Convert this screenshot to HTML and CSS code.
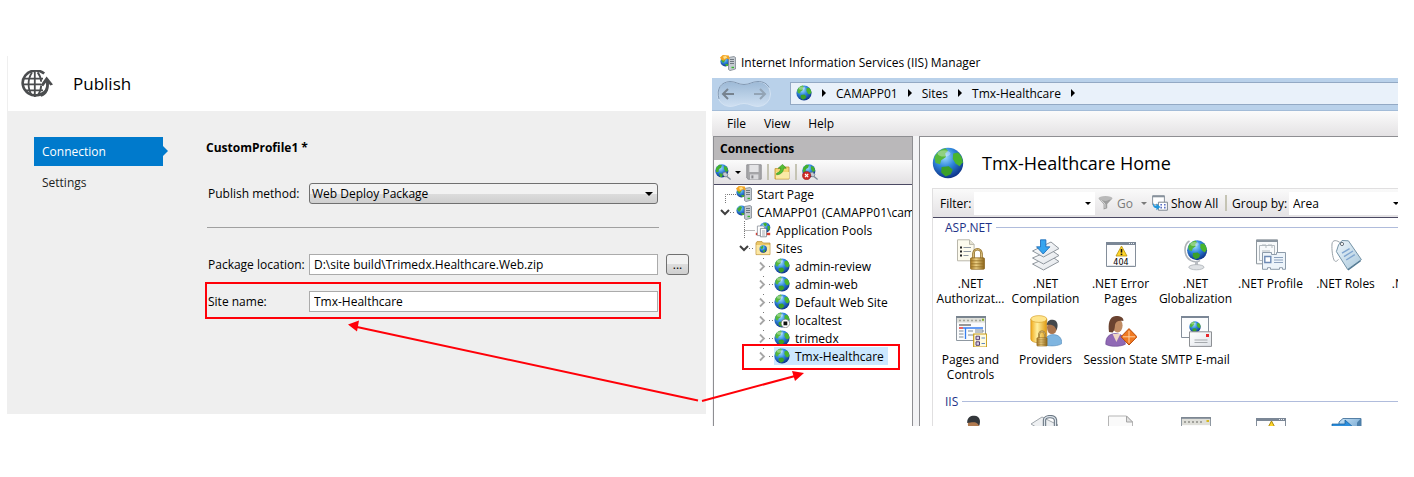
FILE: index.html
```html
<!DOCTYPE html>
<html lang="en">
<head>
<meta charset="utf-8">
<title>Publish and IIS Manager</title>
<link rel="stylesheet" href="styles.css">
</head>
<body>
<svg class="sprite" aria-hidden="true">
  <defs>
    <radialGradient id="sea" cx="40%" cy="30%" r="75%"><stop offset="0" stop-color="#9fdcff"/><stop offset=".45" stop-color="#2f86dc"/><stop offset="1" stop-color="#0a2a80"/></radialGradient>
    <linearGradient id="gold" x2="1"><stop offset="0" stop-color="#f0a818"/><stop offset=".4" stop-color="#fff0a0"/><stop offset="1" stop-color="#e09a10"/></linearGradient>
    <linearGradient id="brass" x2="1"><stop offset="0" stop-color="#a87820"/><stop offset=".4" stop-color="#f0d488"/><stop offset="1" stop-color="#8c6418"/></linearGradient>
    <linearGradient id="paper" x2="1" y2="1"><stop offset="0" stop-color="#fff"/><stop offset="1" stop-color="#dfe3e8"/></linearGradient>
    <linearGradient id="tag" x2="1" y2="1"><stop offset="0" stop-color="#eef6fb"/><stop offset="1" stop-color="#a9c8dc"/></linearGradient>
    <linearGradient id="cube" x2="1" y2="1"><stop offset="0" stop-color="#c8e4f8"/><stop offset="1" stop-color="#5b93c4"/></linearGradient>
    <linearGradient id="pit" y2="1" x2="0"><stop offset="0" stop-color="#9cb9d6"/><stop offset="1" stop-color="#cfe0f2"/></linearGradient>
  </defs>
  <symbol id="globe" viewBox="0 0 16 16">
    <circle cx="8" cy="8" r="7.6" fill="url(#sea)"/>
    <path d="M1.2 5.2C2.3 2.6 4.4 1 6.8.6L8 2 6.6 3.2 7 5 4.6 6.6 4 8.6 1.8 8z" fill="#55b83c"/>
    <path d="M10.6 3.2 13 2.8c1.4 1.2 2.3 2.9 2.4 4.8l-1.6 2-2-1.4L10.4 6z" fill="#49b52e"/>
    <path d="M4.8 10 8.4 9.6l2 1.8-1 2.2-2.6 1.2-2.2-2z" fill="#3ca028"/>
    <ellipse cx="6" cy="3.2" rx="3.2" ry="1.6" fill="#fff" opacity=".35"/>
  </symbol>
  <symbol id="server" viewBox="0 0 16 16">
    <circle cx="5.4" cy="6.5" r="5" fill="url(#sea)"/><path d="M1 5 4 2l2 1-1 3-2 2zM5 9l3 0v2l-2 0z" fill="#45ad35"/>
    <path d="M8.5 2.5 14 1.5l1.5 1V14L10 15.6 8.5 14.5z" fill="#c5cbd1" stroke="#717a84" stroke-width=".7"/>
    <path d="M10 4.5h4M10 6.5h4M10 8.5h4" stroke="#59626c" stroke-width=".8"/><path d="M11.5 12.5h2.5" stroke="#33b52d" stroke-width="1.4"/>
  </symbol>
  <symbol id="iis" viewBox="0 0 16 16">
    <use href="#server"/><path d="M0 2.4 2.8 0l6 .6 1 4-3-1L4 5.8 1.5 5z" fill="#f3a424"/><path d="M3 1.6 6 1l1.2 1.8L4 4z" fill="#ffe38a"/>
  </symbol>
  <symbol id="plugglobe" viewBox="0 0 16 16">
    <circle cx="6.8" cy="6.8" r="6.6" fill="url(#sea)"/><path d="M1 4 4 .8 7 1 6 4 4 5 3.4 8 1 8zM9 2l3 1 1.2 4-2.4 1L9 5zM4 9l4 1-1 3-2 0z" fill="#43b02e"/>
    <path d="M8 8.6 10.6 8l2.2 2.4-.6 2.2-2.4.2L8 11z" fill="#c2ccd6" stroke="#68747f" stroke-width=".7"/><path d="M12 12.4 15.6 15.4" stroke="#7d8b99" stroke-width="1.3"/>
  </symbol>
  <symbol id="pools" viewBox="0 0 16 16">
    <circle cx="10" cy="5.6" r="5.3" fill="url(#sea)"/><path d="M8 1.6l3-.8 1 2-2 2zM12.4 4l2.4 0v4l-2 .6z" fill="#43b02e"/>
    <path d="M.8 12h14.4" stroke="#d63c2e" stroke-width="2.4"/>
    <path d="M2.4 4h6l1 1v8.6h-7z" fill="#fff" stroke="#8b929a" stroke-width=".8"/><path d="M5.4 6.4h5l1 1v7.4h-6z" fill="#fff" stroke="#767e88" stroke-width=".8"/><path d="M7 9h3M7 11h3M7 13h3" stroke="#8d96a0" stroke-width=".8"/>
  </symbol>
  <symbol id="sites" viewBox="0 0 16 16">
    <path d="M1 3 2 1.6h5L8.4 3H15v11.6H1z" fill="#ecc868" stroke="#b88a30" stroke-width=".7"/><path d="M1.4 5h13.2v9.2H1.4z" fill="#fbe7a4"/><circle cx="8.2" cy="9" r="3.7" fill="url(#sea)"/><path d="M5.4 7.4l2.4-1.8.6 2-1.4 2zM8 10.4l2.6-.8-1 2.4H8z" fill="#43b02e"/>
  </symbol>
  <symbol id="stopped" viewBox="0 0 16 16">
    <use href="#globe"/><circle cx="11.4" cy="11.4" r="4.2" fill="#fff" stroke="#777" stroke-width=".7"/><path d="M9.5 9.5h3.8v3.8H9.5z" fill="#111"/>
  </symbol>
  <symbol id="save" viewBox="0 0 16 16">
    <path d="M.8.8h14.4v14.4H2L.8 14z" fill="#a5a5a8" stroke="#919195"/><path d="M3.4 1h9.2v7H3.4z" fill="#e4e4e6"/><path d="M4 10.4h8.4v5H4z" fill="#d9d9dc"/><path d="M5.4 11.4h2v3h-2z" fill="#88888c"/>
  </symbol>
  <symbol id="upfolder" viewBox="0 0 16 16">
    <path d="M1 15V4.6h7L9.4 3H15v12z" fill="#f5d572" stroke="#bd9131" stroke-width=".8"/><path d="M2 8h13v6.6H2z" fill="#fbe9a6"/>
    <path d="M2.6 9.2C5 8.6 6.6 7 6.8 4.2H4.2L8.6.4l3.6 3.8H9.6C9.4 8 7 10.4 2.6 10.8z" fill="#55bf35" stroke="#2d8a18" stroke-width=".6"/>
  </symbol>
  <symbol id="dropglobe" viewBox="0 0 16 16">
    <use href="#plugglobe"/><circle cx="4.6" cy="11.6" r="4.2" fill="#d02a26" stroke="#8e1412" stroke-width=".5"/><path d="M3 10l3.2 3.2M6.2 10 3 13.2" stroke="#fff" stroke-width="1.2"/>
  </symbol>
  <symbol id="funnel" viewBox="0 0 16 16">
    <ellipse cx="7.5" cy="3.2" rx="7" ry="2.2" fill="#b9b9b9"/><path d="M.5 3.6 5.6 9v5.6l3.6-1.4V9l5.2-5.4c-3 2.4-11 2.4-13.9 0z" fill="#9d9d9d"/><path d="M3 4.8 7 9v4" stroke="#d8d8d8" fill="none"/>
  </symbol>
  <symbol id="showall" viewBox="0 0 16 16">
    <path d="M.6.8h11.8v9H.6z" fill="#fff" stroke="#88929c"/><path d="M.6 1.4h11.8" stroke="#88929c" stroke-width="1.8"/>
    <path d="M6.4 7.2h9v8h-9z" fill="#fff" stroke="#7c8690"/><path d="M8.4 9.8h1.6M12 9.8h1.6M8.4 12.6h1.6M12 12.6h1.6" stroke="#5a6fc4" stroke-width="1.6"/>
    <path d="M1.4 7.4c.2 2.6 1 3.4 3 3.4V8.6L8.4 12l-4 3.2V13C2 13 .2 11 1.4 7.4z" fill="#2196dc"/>
  </symbol>
  <symbol id="window" viewBox="0 0 32 32">
    <path d="M1.5 3.5h29v24h-29z" fill="#fdfdfe" stroke="#848e9a"/><path d="M1 4.5h30" stroke="#7b8796" stroke-width="3"/><path d="M24 4.5h5" stroke="#e6ebf0" stroke-width="1" stroke-dasharray="1 1"/><path d="M2.5 26.5h27" stroke="#e3e7ec"/>
  </symbol>
  <symbol id="padlock" viewBox="0 0 16 24">
    <path d="M4 12V7a4 4.6 0 0 1 8 0v5" fill="none" stroke="#937029" stroke-width="2.6"/><path d="M4 12V7a4 4.6 0 0 1 8 0v5" fill="none" stroke="#e3c883" stroke-width=".9"/>
    <rect x="1" y="11" width="14" height="11.5" rx="1" fill="url(#brass)" stroke="#87611b" stroke-width=".7"/><path d="M1.5 14h13M1.5 17h13M1.5 20h13" stroke="#916c24" stroke-width=".8"/>
  </symbol>
  <symbol id="authz" viewBox="0 0 32 32">
    <path d="M2.5.8h12l4.6 4.6v16.4H2.5z" fill="#fdfbee" stroke="#b9b7ab"/><path d="M14.5.8v4.6h4.6" fill="#e8e5d4" stroke="#b9b7ab"/><path d="M5 8.5h2M5 12.5h2M5 16.5h2" stroke="#222" stroke-width="2"/><path d="M8.5 8.5H16M8.5 12.5H16M8.5 16.5h5" stroke="#8e96a0"/>
    <use href="#padlock" x="14.5" y="7.8" width="16" height="24"/>
  </symbol>
  <symbol id="compile" viewBox="0 0 32 32">
    <path d="M2.5 25 21 17l8 5.5L13.5 31z" fill="url(#paper)" stroke="#8f969d"/><path d="M2.5 19 21 11l8 5.5L13.5 25z" fill="url(#paper)" stroke="#8f969d"/><path d="M2.5 12 21 3l8 6.5L13.5 18z" fill="url(#paper)" stroke="#8f969d"/>
    <path d="M10.5.8h5.4v7h4L13.2 15 6.5 7.8h4z" fill="#36a5ef" stroke="#1465b4" stroke-width=".8"/>
  </symbol>
  <symbol id="world" viewBox="0 0 32 32">
    <path d="M9.5 2C3.4 5.4 3.2 17.6 11 21.6c3 1.4 6 1.6 9 0" fill="none" stroke="#aeb3b8" stroke-width="1.6"/><path d="M15 22h3v5h-3z" fill="#b9bdc2"/><ellipse cx="16.4" cy="28.2" rx="7.6" ry="2.6" fill="#dfe2e5" stroke="#a2a7ad" stroke-width=".7"/>
    <use href="#globe" x="6.6" y=".8" width="21" height="21"/>
  </symbol>
  <symbol id="profile" viewBox="0 0 32 32">
    <path d="M1.5.8h21v24h-21z" fill="#f8fafb" stroke="#8f989f"/><path d="M1.5 2h21" stroke="#8a959f" stroke-width="2"/><path d="M4.5 6.5h15v15h-15zM7 6h4v3M13 6h4v3M7 12h8M7 15h5" fill="none" stroke="#b3babf"/>
    <path d="M7.5 13.5h9v2h5v-2h9v16.8h-3v-1.6h-3v1.6h-9v-1.6h-3v1.6h-5z" fill="#edf4fa" stroke="#8d9baa"/><path d="M9.8 17.5h6v6h-6z" fill="#fff" stroke="#6d89b4" stroke-width="1.4"/><path d="M19 18.5h9M19 21h9M19 23.5h9" stroke="#8ba0bd"/>
  </symbol>
  <symbol id="roles" viewBox="0 0 32 32">
    <path d="M11 4.5C7 .6 2.4.6 2 5c-.4 6 .6 13 2.2 16.4 1.4 1.8 3 .8 4.2-1" fill="none" stroke="#9ca4aa"/>
    <path d="M8.5 6 12 1.5l6.4.3L31.4 20.6 17.6 30.4 6.4 12.6z" fill="url(#tag)" stroke="#7593a6"/><path d="M30.6 21.8 18 31" stroke="#4f7792" stroke-width="1.2"/><circle cx="12" cy="5" r="1.6" fill="#fff" stroke="#66717a"/><path d="M12 14.2l7.6-4.6M14 17.6l9-5.6M16.2 21l8.6-5.4" stroke="#7fa5d0" stroke-width="1.4"/>
  </symbol>
  <symbol id="pages" viewBox="0 0 32 32">
    <path d="M1.5 1.5h29v24h-29z" fill="#fafbfc" stroke="#8f98a1"/><path d="M2 3h28v4.6H2z" fill="#dfe0da"/><path d="M1 2h30" stroke="#79848f" stroke-width="2"/><path d="M4 5.5h22" stroke="#a3a59b" stroke-width="1.4" stroke-dasharray="2 2"/><path d="M27 3.8h2v2h-2z" fill="#84ad26"/>
    <path d="M4 10h12" stroke="#333"/><path d="M4 13h4" stroke="#e03030" stroke-width="1.5"/><path d="M8 13h20M10.5 13v11" stroke="#357ef0" stroke-width="1.3"/><path d="M4 16h4.5M4 19h4.5M4 22h4.5M13 16h5M20 15h8v2h-8M13 20h5" fill="none" stroke="#7f8a96"/>
    <path d="M18.7 19h13v13h-13z" fill="#fffbe0" stroke="#c79b16" stroke-width="1.2"/><path d="M21 21.2h3.5v3.5H21zM21 26.8h3.5v3.5H21z" fill="#d6cbe8" stroke="#57416f"/><path d="M26.5 23H30M26.5 28.5H30" stroke="#5e89c2"/>
  </symbol>
  <symbol id="providers" viewBox="0 0 32 32">
    <path d="M.8 4v20c0 5 16 5 16 0V4z" fill="url(#gold)" stroke="#c68a16" stroke-width=".6"/><ellipse cx="8.8" cy="4" rx="8" ry="3.4" fill="#ffe58c" stroke="#d19822" stroke-width=".6"/>
    <path d="M15 30c-.2-7 2.6-10.4 8-10.4s9 3 8.8 9c-3 2.4-12 3-16.8 1.4z" fill="#7fb5e0" stroke="#4f87b5" stroke-width=".6"/><ellipse cx="22" cy="12.6" rx="5" ry="6.4" fill="#a8744e"/><path d="M16.8 10C17 5 21 4 24 5c4 1 4.4 6.4 2.6 10C25 12 24 9 16.8 10z" fill="#43474b"/>
    <use href="#padlock" x="6" y="14.6" width="12" height="17.6"/>
  </symbol>
  <symbol id="session" viewBox="0 0 32 32">
    <path d="M.8 29.4C.6 22 4 19 10 18.6c6 0 10 3 10.4 10.6-5 2.6-14 3-19.6.2z" fill="#9069b5" stroke="#67438c" stroke-width=".6"/><path d="M7.6 19 11.4 27l4-8z" fill="#efd6c4"/>
    <ellipse cx="12.6" cy="10.6" rx="5" ry="7" fill="#c08c64"/><path d="M4 17C3 9 4 1.4 11 1c5 0 7.6 1.6 7.4 5-4-1-8 0-8.4 4-.2 3-.6 6-2.4 7.4z" fill="#6b4330"/>
    <path d="M24 13.6 32 21.8 24 30 16 21.8z" fill="#f07a22" stroke="#b84a0c"/><path d="M24 15.8v12M18 21.8h12" stroke="#ffd0a2"/>
  </symbol>
  <symbol id="smtp" viewBox="0 0 32 32">
    <path d="M1.5 1.5h27v21h-27z" fill="#fcfdfe" stroke="#848e9a"/><path d="M1 2h28" stroke="#7b8796" stroke-width="2"/><use href="#globe" x="9" y="6" width="12" height="12"/>
    <path d="M9.5 16.8h22v14.6h-22z" fill="url(#paper)" stroke="#8d9094"/><path d="M26 19h3v3h-3z" fill="#e8262a"/><path d="M14.5 25h13M14.5 27.5h13" stroke="#a5a9ad"/>
  </symbol>
  <symbol id="person" viewBox="0 0 32 32"><ellipse cx="18.5" cy="9" rx="5.6" ry="7.4" fill="#b07a50"/><path d="M12.2 8C12 2 16 .6 19.6.8c5 .2 6.6 5 4.6 10-1.6-2-2-5-12-2.8z" fill="#33373b"/></symbol>
  <symbol id="lockpage" viewBox="0 0 32 32"><path d="M1 9 12 2l16 8-12 8z" fill="#eef0f2" stroke="#a1a7ad"/><path d="M14.5 14V5c0-4 10-5 11 0v9" fill="none" stroke="#6c7884" stroke-width="3.4"/><path d="M14.5 14V5c0-4 10-5 11 0v9" fill="none" stroke="#dfe6ed" stroke-width="1.2"/></symbol>
  <symbol id="page" viewBox="0 0 32 32"><path d="M3.5 1h18l6 6v24h-24z" fill="#fafafa" stroke="#b5b5b5"/><path d="M21.5 1v6h6z" fill="#e2e2e2" stroke="#a5a5a5"/></symbol>
  <symbol id="listing" viewBox="0 0 32 32"><path d="M1.5 2.5h29v28h-29z" fill="#fafafa" stroke="#8f98a1"/><path d="M2 4h28v6H2z" fill="#dfdfd9"/><path d="M1 3h30" stroke="#79848f" stroke-width="1.6"/><path d="M4 7h20" stroke="#8f8f88" stroke-width="1.6" stroke-dasharray="2 2"/><path d="M26.5 5h2.5v2h-2.5z" fill="#d6b920"/></symbol>
  <symbol id="warnwin" viewBox="0 0 32 32"><use href="#window"/><path d="M16.5 6 23 18H10z" fill="#ffd52a" stroke="#a8870c"/></symbol>
  <symbol id="redirect" viewBox="0 0 32 32"><path d="M9 7 13 3.5h18V22H9z" fill="url(#cube)" stroke="#5580a6"/><path d="M27 7.5 31 3.5V22l-4 4z" fill="#4d7faa"/><path d="M2 9h13V5l8 7-8 7v-4H2z" fill="#2c8edc" stroke="#155b9c" stroke-width=".7"/></symbol>
  <symbol id="open" viewBox="0 0 22 18"><path d="M7 7l4 4 4-4" fill="none" stroke="#404040" stroke-width="2"/><path d="M16 9.5H22" stroke="#777" stroke-dasharray="1 2"/></symbol>
  <symbol id="closed" viewBox="0 0 22 18"><path d="M11.5 1v1" stroke="#777"/><path d="M8 5.5l4 4-4 4" fill="none" stroke="#a6a6a6" stroke-width="1.8"/><path d="M17 9.5H22" stroke="#777" stroke-dasharray="1 2"/></symbol>
</svg>

<main class="stage">
  <section class="publish">
    <header class="publish-head">
      <svg class="publish-logo" viewBox="0 0 32 28" aria-hidden="true"><g fill="none" stroke="#4b4d4f"><path d="M23.2 3.6A13 12.4 0 1 0 26 19" stroke-width="2.6"/><path d="M11 2.4C6.4 9 6.4 19 11 25.6M16.6 2.4c2.4 3 3.4 6 3.6 9.4M16.6 25.6c2.4-3 3.4-6.4 3.6-10M13.8 1v26M3 8.6h19M1 14.4h19M4 20.4h18" stroke-width="1.8"/><path d="M19.6 25.4c6-1.8 7.6-7 6.8-14.6" stroke-width="2.8"/></g><path d="M25.6 6.4 32 14.4l-2.6 1-3.6-4-3.6 4.8-2.6-1.2z" fill="#4b4d4f"/></svg>
      <h1>Publish</h1>
    </header>
    <div class="publish-body">
      <nav class="steps"><a class="current" href="#connection">Connection</a><a href="#settings">Settings</a></nav>
      <form class="profile">
        <h2>CustomProfile1 *</h2>
        <div class="field"><label for="method">Publish method:</label><span class="combo method"><select id="method"><option>Web Deploy Package</option></select></span></div>
        <hr>
        <div class="field"><label for="location">Package location:</label><input id="location" value="D:\site build\Trimedx.Healthcare.Web.zip"><button class="browse" type="button">...</button></div>
        <div class="field marked"><label for="site">Site name:</label><input id="site" value="Tmx-Healthcare"></div>
      </form>
    </div>
  </section>

  <section class="iis">
    <header class="titlebar"><svg class="i16"><use href="#iis"/></svg>Internet Information Services (IIS) Manager</header>
    <div class="address">
      <svg class="travel" viewBox="0 0 56 28" aria-hidden="true"><path d="M14 1.5c6 0 8 3 14 3s8-3 14-3a12.5 12.5 0 0 1 0 25c-6 0-8-3-14-3s-8 3-14 3a12.5 12.5 0 0 1 0-25z" fill="url(#pit)" stroke="#d4e3f3"/><path d="M3 19C0 9 5 2 14 1.5c6 0 8 3 14 3s8-3 14-3c5 0 9 2 11 6" fill="none" stroke="#8198b3"/><path d="M18 14H7M12 9l-5 5 5 5" fill="none" stroke="#77838f" stroke-width="2"/><path d="M38 14h11M44 9l5 5-5 5" fill="none" stroke="#93a4b5" stroke-width="2"/></svg>
      <div class="crumbs"><svg class="i16"><use href="#globe"/></svg><i></i><a href="#server">CAMAPP01</a><i></i><a href="#sites">Sites</a><i></i><a href="#tmx">Tmx-Healthcare</a><i></i></div>
    </div>
    <nav class="menu"><button>File</button><button>View</button><button>Help</button></nav>
    <div class="panes">
      <aside class="connections">
        <h2>Connections</h2>
        <div class="tools"><button class="split" aria-label="Connect"><svg class="i16"><use href="#plugglobe"/></svg><b class="caret"></b></button><button aria-label="Save"><svg class="i16"><use href="#save"/></svg></button><span class="sep"></span><button aria-label="Up"><svg class="i16"><use href="#upfolder"/></svg></button><span class="sep"></span><button aria-label="Disconnect"><svg class="i16"><use href="#dropglobe"/></svg></button></div>
        <ul class="tree">
          <li><svg class="twig" viewBox="0 0 22 18"><path d="M11.5 18V9.5H22" fill="none" stroke="#777" stroke-dasharray="1 1"/></svg><span class="node"><svg class="i16"><use href="#iis"/></svg>Start Page</span></li>
          <li><svg class="twig"><use href="#open"/></svg><span class="node"><svg class="i16"><use href="#server"/></svg>CAMAPP01 (CAMAPP01\cam</span></li>
          <li class="l1"><svg class="twig" viewBox="0 0 22 18"><path d="M11.5 0v18M11.5 9.5H22" stroke="#777" stroke-dasharray="1 1"/></svg><span class="node"><svg class="i16"><use href="#pools"/></svg>Application Pools</span></li>
          <li class="l1"><svg class="twig"><use href="#open"/></svg><span class="node"><svg class="i16"><use href="#sites"/></svg>Sites</span></li>
          <li class="l2"><svg class="twig"><use href="#closed"/></svg><span class="node"><svg class="i16"><use href="#globe"/></svg>admin-review</span></li>
          <li class="l2"><svg class="twig"><use href="#closed"/></svg><span class="node"><svg class="i16"><use href="#globe"/></svg>admin-web</span></li>
          <li class="l2"><svg class="twig"><use href="#closed"/></svg><span class="node"><svg class="i16"><use href="#globe"/></svg>Default Web Site</span></li>
          <li class="l2"><svg class="twig"><use href="#closed"/></svg><span class="node"><svg class="i16"><use href="#stopped"/></svg>localtest</span></li>
          <li class="l2"><svg class="twig"><use href="#closed"/></svg><span class="node"><svg class="i16"><use href="#globe"/></svg>trimedx</span></li>
          <li class="l2 flagged"><svg class="twig"><use href="#closed"/></svg><span class="node selected"><svg class="i16"><use href="#globe"/></svg>Tmx-Healthcare</span></li>
        </ul>
      </aside>
      <article class="home">
        <header class="home-head"><svg class="i32"><use href="#globe"/></svg><h1>Tmx-Healthcare Home</h1></header>
        <div class="features">
          <div class="filterbar">
            <label for="filter">Filter:</label><span class="combo filter"><input id="filter"></span>
            <button class="go" disabled><svg class="i16"><use href="#funnel"/></svg>Go<b class="caret"></b></button>
            <button class="all"><svg class="i16"><use href="#showall"/></svg>Show All</button><span class="sep"></span>
            <label class="by" for="group">Group by:</label><span class="combo group"><select id="group"><option>Area</option></select></span>
          </div>
          <h3>ASP.NET</h3>
          <div class="tiles">
            <a href="#authz"><svg class="i32"><use href="#authz"/></svg>.NET Authorizat...</a>
            <a href="#compile"><svg class="i32"><use href="#compile"/></svg>.NET Compilation</a>
            <a href="#err404"><svg class="i32" viewBox="0 0 32 32"><use href="#window"/><path d="M16.5 7 22 17H11z" fill="#ffd52a" stroke="#b4900c" stroke-width=".8" stroke-linejoin="round"/><path d="M16.5 10v3.6" stroke="#111" stroke-width="1.6"/><path d="M15.7 14.6h1.6v1.5h-1.6z" fill="#111"/><text class="code" x="16" y="26" text-anchor="middle">404</text></svg>.NET Error Pages</a>
            <a href="#world"><svg class="i32"><use href="#world"/></svg>.NET Globalization</a>
            <a href="#profile"><svg class="i32"><use href="#profile"/></svg>.NET Profile</a>
            <a href="#roles"><svg class="i32"><use href="#roles"/></svg>.NET Roles</a>
            <a href="#trust"><svg class="i32"></svg>.NET Trust Levels</a>
          </div>
          <div class="tiles">
            <a href="#pages"><svg class="i32"><use href="#pages"/></svg>Pages and Controls</a>
            <a href="#providers"><svg class="i32"><use href="#providers"/></svg>Providers</a>
            <a href="#session"><svg class="i32"><use href="#session"/></svg>Session State</a>
            <a href="#smtp"><svg class="i32"><use href="#smtp"/></svg>SMTP E-mail</a>
          </div>
          <h3>IIS</h3>
          <div class="tiles peek">
            <a href="#auth" aria-label="Authentication"><svg class="i32"><use href="#person"/></svg></a>
            <a href="#lock" aria-label="Authorization Rules"><svg class="i32"><use href="#lockpage"/></svg></a>
            <a href="#doc" aria-label="Default Document"><svg class="i32"><use href="#page"/></svg></a>
            <a href="#browse" aria-label="Directory Browsing"><svg class="i32"><use href="#listing"/></svg></a>
            <a href="#errors" aria-label="Error Pages"><svg class="i32"><use href="#warnwin"/></svg></a>
            <a href="#redirect" aria-label="HTTP Redirect"><svg class="i32"><use href="#redirect"/></svg></a>
          </div>
        </div>
      </article>
    </div>
  </section>
  <svg class="arrows" viewBox="0 0 1414 477" aria-hidden="true"><g stroke="#ff0008" stroke-width="2"><path d="M698 400.5 357 327"/><path d="M702 401 795 376"/></g><path d="M348 324.500l11-4-2 11zM804 373l-12-2 3 10z" fill="#ff0008"/></svg>
</main>
</body>
</html>
```

FILE: styles.css
```css
* { box-sizing: border-box; }
body { margin: 0; background: #fff; color: #000; font: 12px/15px "Open Sans", "Noto Sans", sans-serif; }
h1, h2, h3, ul { margin: 0; padding: 0; font-size: 12px; font-weight: 400; list-style: none; }
a { color: inherit; text-decoration: none; }
button { border: 0; padding: 0; background: none; color: inherit; font: inherit; }
input, select { font: inherit; color: inherit; min-width: 0; border-radius: 0; outline: 0; }
svg { display: block; flex: none; }
.sprite { position: absolute; width: 0; height: 0; }
.i16 { width: 16px; height: 16px; }
.i32 { width: 32px; height: 32px; }
.code { font: 8px "DejaVu Sans", sans-serif; }

.stage { position: relative; display: grid; grid-template-columns: minmax(0, 699fr) minmax(0, 686fr); gap: 6px; align-items: start; padding: 48px 16px 51px 7px; }
.arrows { position: absolute; left: 0; top: 0; width: 100%; pointer-events: none; }

.publish { margin-top: 8px; border-left: 1px solid #efefef; }
.publish-head { display: flex; align-items: center; gap: 20px; height: 55px; padding-left: 13px; }
.publish-logo { width: 32px; height: 28px; }
.publish-head h1 { font-size: 17px; line-height: 24px; }
.publish-body { display: flex; gap: 43px; padding: 26px 17px 102px 26px; background: #efefef; }
.steps { display: flex; flex-direction: column; flex: none; width: 129px; gap: 2px; color: #1e1e1e; }
.steps a { position: relative; padding: 7px 8px; }
.steps .current { background: #007acc; color: #fff; }
.steps .current::after { content: ""; position: absolute; left: 100%; top: 9px; border: 5px solid transparent; border-left-color: #007acc; border-right: 0; }
.profile { flex: 1; min-width: 0; }
.profile h2 { margin: 3px 0 27px; font-size: 12px; line-height: 16px; font-weight: 700; }
.field { display: flex; align-items: center; position: relative; padding: 0 31px 0 2px; }
.field label { flex: none; width: 101px; }
.field input { flex: 1; height: 21px; padding: 0 4px; border: 1px solid #ababab; background: #fff; }
.profile hr { margin: 23px 30px 26px 1px; border: 0; border-top: 1px solid #a0a0a0; }
.combo { position: relative; display: block; }
.combo select, .combo input { width: 100%; height: 100%; border: 0; appearance: none; background: none; }
.combo::after { content: ""; position: absolute; right: 4px; top: 50%; margin-top: -1px; border: 3px solid transparent; border-top-color: #000; border-bottom: 0; pointer-events: none; }
.method { flex: 1; height: 21px; border: 1px solid #707070; border-radius: 3px; background: linear-gradient(#f2f2f2 50%, #dddddd 50%, #cfcfcf); }
.method select { display: block; padding: 0 2px; }
.method::after { border-width: 4px 4px 0; margin-top: -2px; }
.browse { width: 23px; height: 21px; margin: 0 -31px 0 8px; border: 1px solid #707070; border-radius: 3px; background: linear-gradient(#f2f2f2 50%, #dddddd 50%, #cfcfcf); line-height: 15px; }
.marked { margin-top: 16px; }
.marked::after { content: ""; position: absolute; inset: -9px 28px -7px -1px; border: 2px solid #ff0008; }

.iis { overflow: hidden; }
.titlebar { display: flex; align-items: center; gap: 5px; height: 30px; padding: 0 0 1px 8px; }
.address { display: flex; align-items: center; justify-content: space-between; gap: 18px; height: 33px; padding-left: 4px; background: #b9d1ea; border-bottom: 1px solid #a3bcd8; }
.travel { width: 56px; height: 28px; }
.crumbs { display: flex; align-items: center; gap: 9px; flex: 1; height: 23px; margin-bottom: 2px; padding-left: 5px; background: #e9f1fa; border: 1px solid #93a9c4; border-right: 0; }
.crumbs i { margin: 0 1px; border: 4px solid transparent; border-left-color: #000; border-right: 0; }
.menu { display: flex; align-items: center; gap: 18px; height: 25px; padding-left: 15px; background: linear-gradient(#fbfbfb, #e4e2e4); }
.panes { display: flex; gap: 6px; padding-left: 1px; background: #f3f3f5; }
.connections { flex: none; width: 200px; border: 1px solid #8e8e92; border-bottom: 0; background: #fff; overflow: hidden; }
.connections h2 { padding: 4px 6px; background: #bab8ba; font-weight: 700; }
.tools { display: flex; align-items: center; gap: 5px; height: 25px; padding-left: 1px; background: linear-gradient(#fbfbfb, #e2e0e2); border-bottom: 1px solid #4b4963; }
.split { display: flex; align-items: center; gap: 4px; }
.caret { border: 3px solid transparent; border-top-color: currentColor; border-bottom: 0; }
.sep { flex: none; width: 2px; height: 16px; background: #c5c4b4; }
.tree li { position: relative; display: flex; height: 18px; white-space: nowrap; }
.tree .l1 { padding-left: 19px; }
.tree .l2 { padding-left: 38px; }
.twig { width: 22px; height: 18px; }
.node { display: flex; align-items: center; gap: 5px; padding-right: 4px; }
.selected { background: #cce8ff; }
.flagged::after { content: ""; position: absolute; inset: -3px 12px -5px 28px; border: 2px solid #ff0008; }
.home { flex: 1; min-width: 0; border: 1px solid #8e8e92; border-width: 1px 0 0 1px; background: #fff; overflow: hidden; padding-left: 12px; }
.home-head { display: flex; align-items: center; gap: 18px; height: 51px; }
.home-head h1 { font-size: 18px; line-height: 24px; }
.features { border: 1px solid #e0dfe0; border-width: 1px 0 0 1px; }
.filterbar { display: flex; align-items: center; height: 29px; padding-left: 7px; background: linear-gradient(#fafafa, #e4e2e4); border-bottom: 1px solid #4b4963; white-space: nowrap; }
.filterbar > * { flex: none; }
.filterbar label { width: 34px; }
.filter { width: 121px; height: 23px; background: #fff; }
.filterbar button { display: flex; align-items: center; }
.filterbar .go { gap: 3px; width: 49px; margin: 0 5px 0 3px; color: #7a7a7a; }
.go .caret { margin-left: auto; }
.filterbar .all { gap: 3px; width: 66px; }
.filterbar .sep { margin: 0 5px 0 7px; }
.filterbar .by { width: 57px; }
.group { width: 114px; height: 23px; background: #fff; }
.group select { padding: 0 4px; }
.features h3 { display: flex; align-items: center; gap: 4px; padding-left: 12px; height: 19px; color: #1e3287; }
.features h3::after { content: ""; flex: 1; height: 1px; background: #b0bcdc; }
.tiles { display: flex; padding-top: 2px; }
.tiles + h3 { margin-top: 3px; }
.tiles a { flex: none; width: 75px; display: flex; flex-direction: column; align-items: center; gap: 5px; text-align: center; height: 74px; }
.peek { padding-top: 4px; overflow: hidden; }
.tiles.peek a { height: 11px; }
```
